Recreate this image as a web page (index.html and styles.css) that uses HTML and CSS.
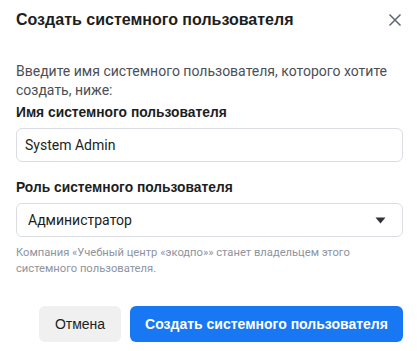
FILE: index.html
```html
<!DOCTYPE html>
<html lang="ru">
<head>
    <meta charset="utf-8">
    <title>Создать системного пользователя</title>
    <link rel="stylesheet" href="styles.css">
</head>
<body>
    <div class="dialog">
        <header class="kop">
            <h1>Создать системного пользователя</h1>
            <button class="luk" aria-label="Закрыть">
                <svg width="14" height="14" viewBox="0 0 14 14">
                    <path d="M1.5 1.5 L12.5 12.5 M12.5 1.5 L1.5 12.5" stroke="#606770" stroke-width="1.5" fill="none"/>
                </svg>
            </button>
        </header>

        <p class="intro">Введите имя системного пользователя, которого хотите создать, ниже:</p>

        <label class="felt-navn">Имя системного пользователя</label>
        <div class="felt">System Admin</div>

        <label class="felt-navn rolle">Роль системного пользователя</label>
        <div class="felt vaelg">
            <span>Администратор</span>
            <svg width="11" height="7" viewBox="0 0 11 7"><path d="M0.5 0.5 L10.5 0.5 L5.5 6.5 Z" fill="#303338"/></svg>
        </div>

        <p class="hjaelp">Компания «Учебный центр «экодпо»» станет владельцем этого системного пользователя.</p>

        <footer class="knapper">
            <button class="knap annuller">Отмена</button>
            <button class="knap opret">Создать системного пользователя</button>
        </footer>
    </div>
</body>
</html>
```

FILE: styles.css
```css
body {
    margin: 0;
    background-color: white;
    font-family: Roboto, "Liberation Sans", sans-serif;
    color: #1c1e21;
}

.dialog {
    padding: 8px 16px 0 16px;
}

.kop {
    display: flex;
    align-items: center;
    justify-content: space-between;
    height: 24px;
}

h1 {
    margin: 0;
    font-family: "Liberation Sans", Arial, sans-serif;
    font-size: 16px;
    font-weight: bold;
    color: #1c1e21;
}

.luk {
    border: none;
    background: none;
    padding: 0;
    margin-right: 1px;
    display: flex;
    cursor: pointer;
}

.intro {
    margin: 30px 0 0 0;
    font-size: 14px;
    line-height: 19px;
    color: #4b4f56;
}

.felt-navn {
    display: block;
    margin-top: 4px;
    font-family: "Liberation Sans", Arial, sans-serif;
    font-size: 13.8px;
    font-weight: bold;
    line-height: 18px;
    color: #1c1e21;
}

.rolle {
    margin-top: 17px;
}

.felt {
    margin-top: 6px;
    height: 34px;
    box-sizing: border-box;
    border: 1px solid #dadde1;
    border-radius: 6px;
    padding: 0 12px 0 8px;
    display: flex;
    align-items: center;
    font-size: 14px;
    color: #1c1e21;
}

.vaelg {
    justify-content: space-between;
    padding-left: 11px;
    padding-right: 16px;
}

.hjaelp {
    margin: 8px 0 0 0;
    font-size: 11.2px;
    line-height: 16px;
    color: #8d949e;
}

.knapper {
    display: flex;
    justify-content: flex-end;
    gap: 9px;
    margin-top: 29px;
}

.knap {
    height: 36px;
    border: none;
    border-radius: 6px;
    font-family: "Liberation Sans", Arial, sans-serif;
    font-size: 14px;
    cursor: pointer;
}

.annuller {
    width: 82px;
    background-color: #f0f0f0;
    color: #1c1e21;
}

.opret {
    width: 273px;
    background-color: #1877f2;
    color: white;
    font-weight: bold;
}
```
